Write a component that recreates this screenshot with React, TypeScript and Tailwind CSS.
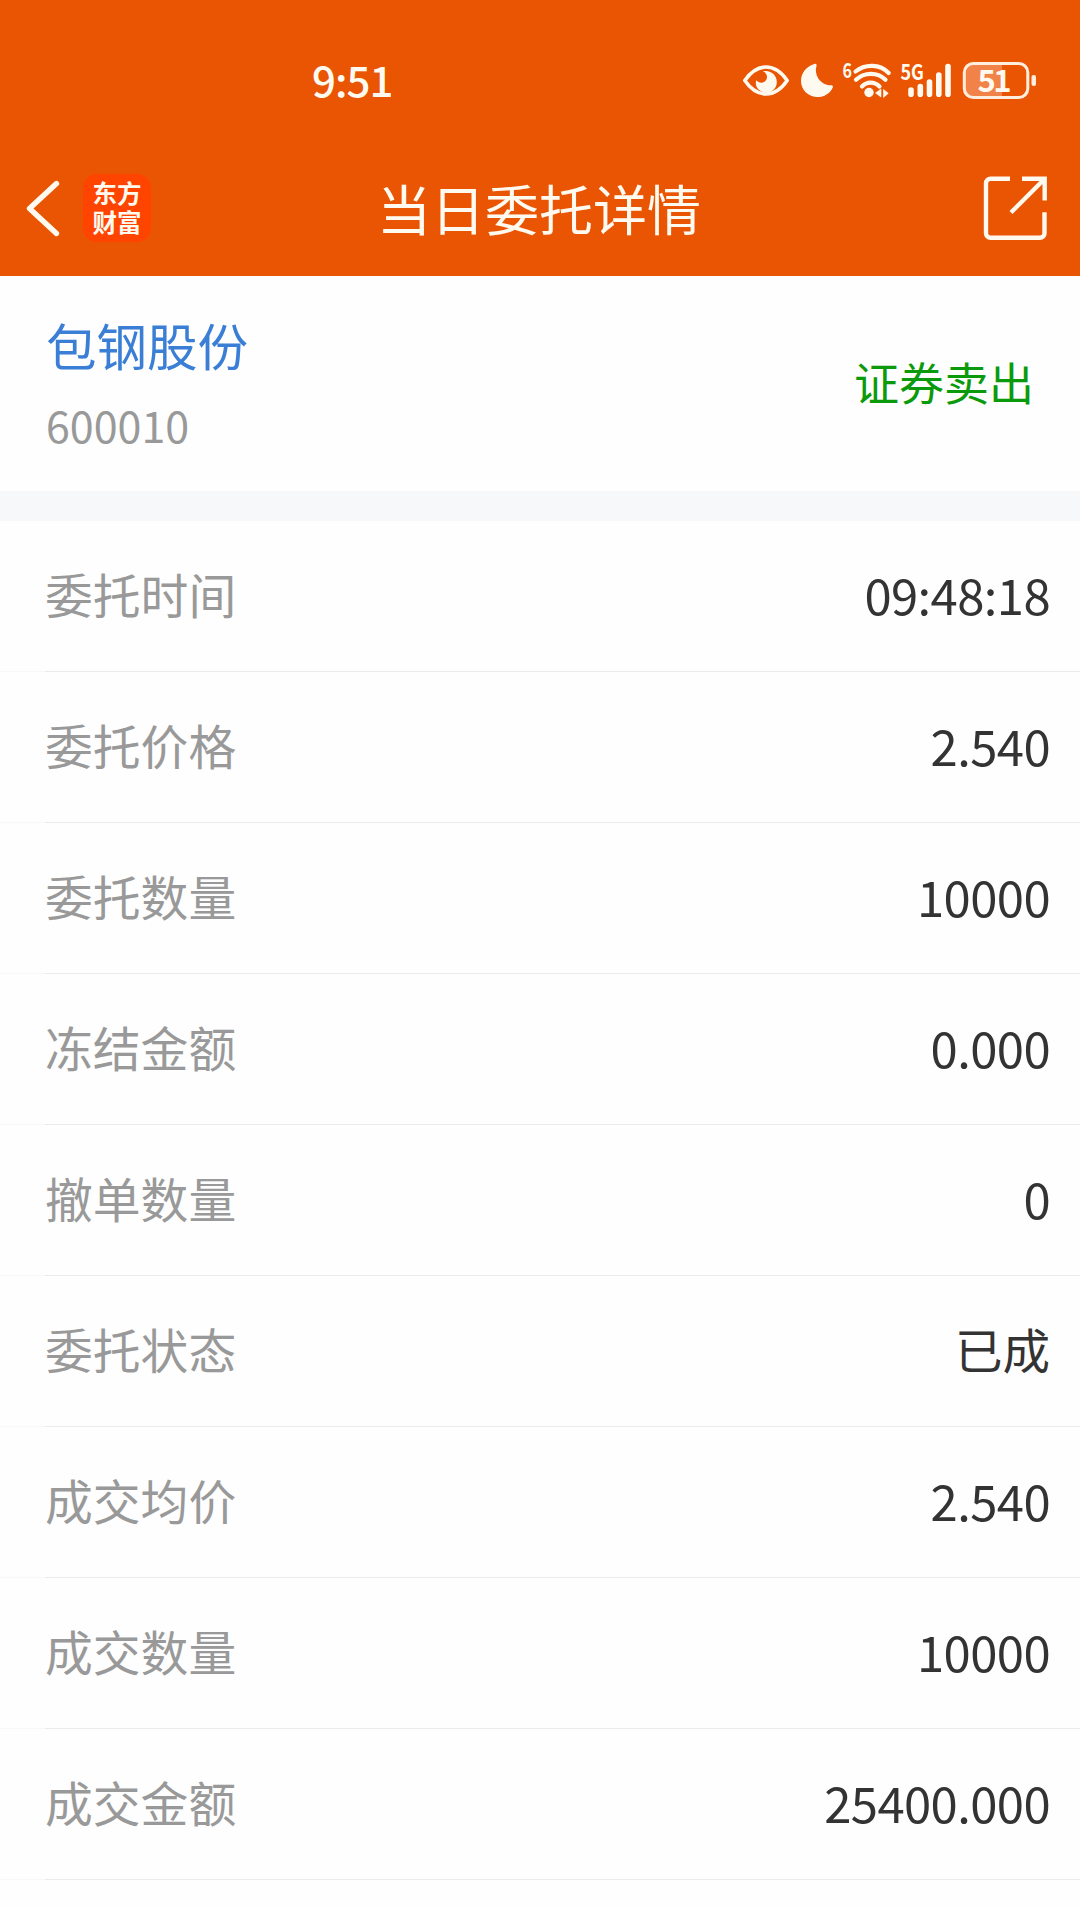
const details = [
  { label: '委托时间', value: '09:48:18' },
  { label: '委托价格', value: '2.540' },
  { label: '委托数量', value: '10000' },
  { label: '冻结金额', value: '0.000' },
  { label: '撤单数量', value: '0' },
  { label: '委托状态', value: '已成', isText: true },
  { label: '成交均价', value: '2.540' },
  { label: '成交数量', value: '10000' },
  { label: '成交金额', value: '25400.000' },
]

const EyeIcon = () => (
  <svg width="48" height="40" viewBox="742 60 48 40" fill="none">
    <path d="M744.800 80.500C751 71.500 758 67 766 67s15 4.500 21.200 13.500C781 89.500 774 94 766 94s-15-4.500-21.200-13.500Z" stroke="#fffaf0" strokeWidth="3.600" strokeLinejoin="round" />
    <path d="M763 71.200c8-1.500 13.800 4 13.800 10.800 0 6-4.600 10.500-10.600 10.500S755.800 88 755.800 83c0-1 .2-2 .6-2.800 1.200 1.600 2.800 2.500 4.800 2.500 3.300 0 5.800-2.400 5.800-5.700 0-2.400-1.400-4.600-4-5.800Z" fill="#fffaf0" />
  </svg>
)

const MoonIcon = () => (
  <svg width="34" height="40" viewBox="800 60 34 40">
    <path d="M814.500 64c1.500-.6 2.500.5 2 2-1.200 3.500-.8 8.500 1.800 12.500 3 4.500 8.500 7.200 12.700 6.800 1.700-.1 2.400 1 1.700 2.400C830 93.500 824 97 817.500 97 808.500 97 801 90 801 81c0-8 5.500-14.700 13.500-17Z" fill="#fffaf0" />
  </svg>
)

const WifiIcon = () => (
  <svg className="overflow-visible" width="50" height="40" viewBox="842 60 50 40" fill="none">
    <text x="842.500" y="77.500" fontSize="20" fontWeight="700" textLength="9.500" lengthAdjust="spacingAndGlyphs" fill="#fffaf0">6</text>
    <g stroke="#fffaf0" strokeWidth="4.200" strokeLinecap="round">
      <path d="M855.500 71.500c9.500-7.800 24.500-7.800 33.200 1.500" />
      <path d="M856 79.800c8-8 22-8 29.500 0" />
      <path d="M862 86.500c4.800-5.200 12.500-5.200 17.500 0" />
    </g>
    <circle cx="869" cy="92.500" r="4.700" fill="#fffaf0" />
    <path d="M881 89v8l-5.500-4ZM883.500 89.500v8l4.800-4.200Z" fill="#fffaf0" stroke="#fffaf0" strokeWidth="0.600" />
  </svg>
)

const SignalIcon = () => (
  <svg className="overflow-visible" width="52" height="40" viewBox="900 60 52 40">
    <text x="900.500" y="80" fontSize="21.500" fontWeight="700" textLength="23.500" lengthAdjust="spacingAndGlyphs" fill="#fffaf0">5G</text>
    <g stroke="#fffaf0" strokeWidth="5.600" strokeLinecap="round">
      <path d="M911 90v4.300" />
      <path d="M920.300 86.500v7.800" />
      <path d="M929.500 82v12.300" />
      <path d="M938.800 75v19.300" />
      <path d="M948 66.500v27.800" />
    </g>
  </svg>
)

const BatteryIcon = () => (
  <svg className="overflow-visible" width="76" height="40" viewBox="962 60 76 40" fill="none">
    <path d="M973 64h29v33h-29a8 8 0 0 1-8-8V72a8 8 0 0 1 8-8Z" fill="#f18248" />
    <rect x="964.300" y="63.500" width="63.500" height="34" rx="9" stroke="#ffeedd" strokeWidth="3" />
    <rect x="1031.500" y="75" width="4.500" height="11" rx="2" fill="#ffeedd" />
    <text x="977.500" y="92" fontSize="31" fontWeight="700" textLength="34" fill="#fffaf0">51</text>
  </svg>
)

const BackIcon = () => (
  <svg width="36" height="60" viewBox="25 178 36 60" fill="none">
    <path d="M56.500 183.500 29.500 208.500l27 25" stroke="#fffaf0" strokeWidth="5.400" strokeLinecap="round" strokeLinejoin="round" />
  </svg>
)

const ShareIcon = () => (
  <svg width="64" height="68" viewBox="983 174.500 64 68" fill="none" stroke="#fffaf0" strokeWidth="4.400">
    <path d="M1010 179.200h-19.500a4.500 4.500 0 0 0-4.500 4.500v50a4.500 4.500 0 0 0 4.500 4.500h49.500a4.500 4.500 0 0 0 4.500-4.500v-21" />
    <path d="M1022 179.200h22.700v21.800M1043.500 180.500 1011 213" />
  </svg>
)

const StatusBar = () => (
  <div className="flex h-40 items-center justify-between pr-[42px] pl-[312px]">
    <span className="pb-[3px] text-[42px] leading-none font-medium tracking-[-1px] text-[#fffaf0]">9:51</span>
    <div className="flex items-center">
      <EyeIcon />
      <div className="ml-2.5"><MoonIcon /></div>
      <div className="ml-2"><WifiIcon /></div>
      <div className="ml-2"><SignalIcon /></div>
      <div className="ml-2.5"><BatteryIcon /></div>
    </div>
  </div>
)

const NavBar = () => (
  <div className="grid h-[98px] grid-cols-3 items-start text-[#fffaf0]">
    <div className="flex items-center pl-[25px]">
      <BackIcon />
      <div className="ml-[22px] flex h-[68px] w-[68px] flex-col items-center justify-center rounded-[14px] bg-[#ff4400] pb-[3px] text-[24.500px] leading-[29px] font-bold">
        <span>东方</span>
        <span>财富</span>
      </div>
    </div>
    <h1 className="-ml-[2px] pt-[4px] text-center text-[54px] leading-[60px] whitespace-nowrap">当日委托详情</h1>
    <div className="flex justify-end pr-[33px]">
      <ShareIcon />
    </div>
  </div>
)

const App = () => {
  return (
    <div className="h-[1907px] w-[1080px] overflow-hidden bg-[#fefefe] font-['Noto_Sans_CJK_SC',sans-serif]">
      <header className="h-[276px] bg-[#ea5504]">
        <StatusBar />
        <div className="pt-[14px]">
          <NavBar />
        </div>
      </header>

      <section className="flex h-[215px] items-center justify-between pr-[46px] pl-[46px]">
        <div>
          <p className="text-[50.500px] leading-[80px] text-[#3a7fd5]">包钢股份</p>
          <p className="text-[43px] leading-[80px] text-[#999999]">600010</p>
        </div>
        <span className="pb-[5px] text-[45px] leading-none text-[#0b9a0b]">证券卖出</span>
      </section>

      <div className="h-[30px] bg-[#f6f8fa]" />

      <ul>
        {details.map(item => (
          <li key={item.label} className="flex h-[151px] flex-col">
            <div className="flex flex-1 items-center justify-between pr-[30px] pb-[4px] pl-[45px]">
              <span className="text-[47.800px] leading-none text-[#999999]">{item.label}</span>
              {item.isText ? (
                <span className="text-[47.500px] leading-none text-[#333333]">{item.value}</span>
              ) : (
                <span className="pb-[2px] text-[49px] leading-none tracking-[-0.600px] text-[#333333]">{item.value}</span>
              )}
            </div>
            <div className="flex h-px">
              <div className="w-[45px] bg-[#f8f8f8]" />
              <div className="flex-1 bg-[#ebebeb]" />
            </div>
          </li>
        ))}
      </ul>
    </div>
  )
}

export default App
